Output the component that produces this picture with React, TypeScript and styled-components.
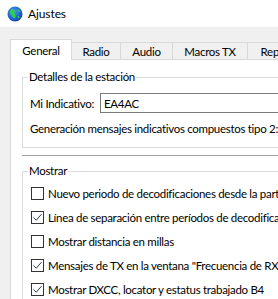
import * as React from 'react';
import styled, { createGlobalStyle, css } from 'styled-components';

const GlobalStyle = createGlobalStyle`
	html, body {
		margin: 0;
		padding: 0;
		background: #f0f0f0;
	}
	body {
		font-family: Lato, "Liberation Sans", Arial, sans-serif;
		font-size: 11.5px;
		letter-spacing: -0.3px;
		color: #000;
	}
`;

const Window = styled.div`
	width: 278px;
	height: 299px;
	overflow: hidden;
	background: #f0f0f0;
	white-space: nowrap;
`;

const TitleBar = styled.div`
	height: 27px;
	background: #fff;
	display: flex;
	align-items: center;
	padding-left: 7px;
	gap: 5px;
	font-size: 12px;
	letter-spacing: -0.1px;
`;

const Body = styled.div`
	padding: 12px 0 0 10px;
`;

const TabStrip = styled.div`
	display: flex;
	height: 20px;
	align-items: flex-start;
`;

interface TabProps {
	$active?: boolean;
	$width: number;
}

const Tab = styled.div<TabProps>`
	box-sizing: border-box;
	flex: none;
	width: ${(p) => p.$width}px;
	display: flex;
	align-items: center;
	justify-content: center;
	border: 1px solid #d9d9d9;
	border-bottom: none;
	margin-left: -1px;
	&:first-child {
		margin-left: 0;
	}
	${(p) =>
		p.$active
			? css`
					height: 21px;
					background: #fff;
					position: relative;
					z-index: 1;
					padding-top: 1px;
				`
			: css`
					height: 17px;
					margin-top: 3px;
					background: #f0f0f0;
					padding-top: 1px;
				`}
`;

const Panel = styled.div`
	width: 420px;
	height: 260px;
	background: #fff;
	border: 1px solid #d9d9d9;
	padding-left: 11px;
`;

const Group = styled.fieldset<{ $top: number }>`
	margin: ${(p) => p.$top}px 0 0 0;
	padding: 0 0 10px 7px;
	border: 1px solid #dcdcdc;
	min-width: 0;
`;

const Legend = styled.legend`
	padding: 0 1px;
	margin-left: -2px;
	line-height: 16px;
`;

const FieldRow = styled.div`
	display: flex;
	align-items: center;
	height: 20px;
	margin-top: 8px;
`;

const FieldLabel = styled.span`
	width: 70px;
	flex: none;
`;

const TextBox = styled.div`
	box-sizing: border-box;
	height: 20px;
	width: 300px;
	border: 1px solid #7a7a7a;
	padding-left: 3px;
	display: flex;
	align-items: center;
`;

const Note = styled.div`
	line-height: 16px;
	margin-top: 8px;
`;

const Divider = styled.div`
	height: 1px;
	background: #a0a0a0;
	margin-top: 7px;
`;

const CheckRow = styled.div`
	display: flex;
	align-items: center;
	height: 24px;
	gap: 4px;
	padding-left: 1px;
`;

const Box = styled.span`
	box-sizing: border-box;
	width: 13px;
	height: 13px;
	flex: none;
	border: 1px solid #333;
	background: #fff;
	display: flex;
	align-items: center;
	justify-content: center;
`;

const CheckList = styled.div`
	margin-top: 2px;
`;

const Globe = () => (
	<svg width="16" height="16" viewBox="0 0 16 16">
		<defs>
			<radialGradient id="sea" cx="40%" cy="35%" r="70%">
				<stop offset="0%" stopColor="#4aa3ff" />
				<stop offset="100%" stopColor="#0a3fae" />
			</radialGradient>
		</defs>
		<circle cx="8" cy="8" r="7.5" fill="url(#sea)" />
		<path d="M4 3.5 C6 3 8 4 7.5 6 C7 8 9 9 8.5 11 C8 13 6 12.5 5.5 10.5 C5 9 3 8.5 3 6.5 C3 5 3.5 4 4 3.5 Z" fill="#2fd04a" />
		<path d="M10.5 3 C12.5 3.5 13.5 5 13 6.5 C12 6.5 11 5.5 10.5 3 Z" fill="#2fd04a" />
		<path d="M11 10 C12.5 9.5 13 11 12 12.5 C11 12.5 10.5 11 11 10 Z" fill="#2fd04a" />
	</svg>
);

const Check = ({ checked, label }: { checked: boolean; label: string }) => (
	<CheckRow>
		<Box>
			{checked && (
				<svg width="11" height="11" viewBox="0 0 11 11">
					<polyline points="1.5,5.5 4.2,8.2 9.5,2.2" fill="none" stroke="#2b3f5c" strokeWidth="1" />
				</svg>
			)}
		</Box>
		<span>{label}</span>
	</CheckRow>
);

const tabs = [
	{ name: 'General', width: 62 },
	{ name: 'Radio', width: 50 },
	{ name: 'Audio', width: 53 },
	{ name: 'Macros TX', width: 76 },
	{ name: 'Reportes', width: 70 },
];

const options = [
	{ label: 'Nuevo periodo de decodificaciones desde la parte superior', checked: false },
	{ label: 'Línea de separación entre períodos de decodificación', checked: true },
	{ label: 'Mostrar distancia en millas', checked: false },
	{ label: 'Mensajes de TX en la ventana "Frecuencia de RX"', checked: true },
	{ label: 'Mostrar DXCC, locator y estatus trabajado B4', checked: true },
];

const App: React.FC = () => {
	return (
		<Window>
			<GlobalStyle />
			<TitleBar>
				<Globe />
				<span>Ajustes</span>
			</TitleBar>
			<Body>
				<TabStrip>
					{tabs.map((t, i) => (
						<Tab key={t.name} $active={i === 0} $width={t.width}>
							{t.name}
						</Tab>
					))}
				</TabStrip>
				<Panel>
					<Group $top={9}>
						<Legend>Detalles de la estación</Legend>
						<FieldRow>
							<FieldLabel>Mi Indicativo:</FieldLabel>
							<TextBox>EA4AC</TextBox>
						</FieldRow>
						<Note>Generación mensajes indicativos compuestos tipo 2:</Note>
					</Group>
					<Divider />
					<Group $top={7}>
						<Legend>Mostrar</Legend>
						<CheckList>
							{options.map((o) => (
								<Check key={o.label} checked={o.checked} label={o.label} />
							))}
						</CheckList>
					</Group>
				</Panel>
			</Body>
		</Window>
	);
};

export default App;
